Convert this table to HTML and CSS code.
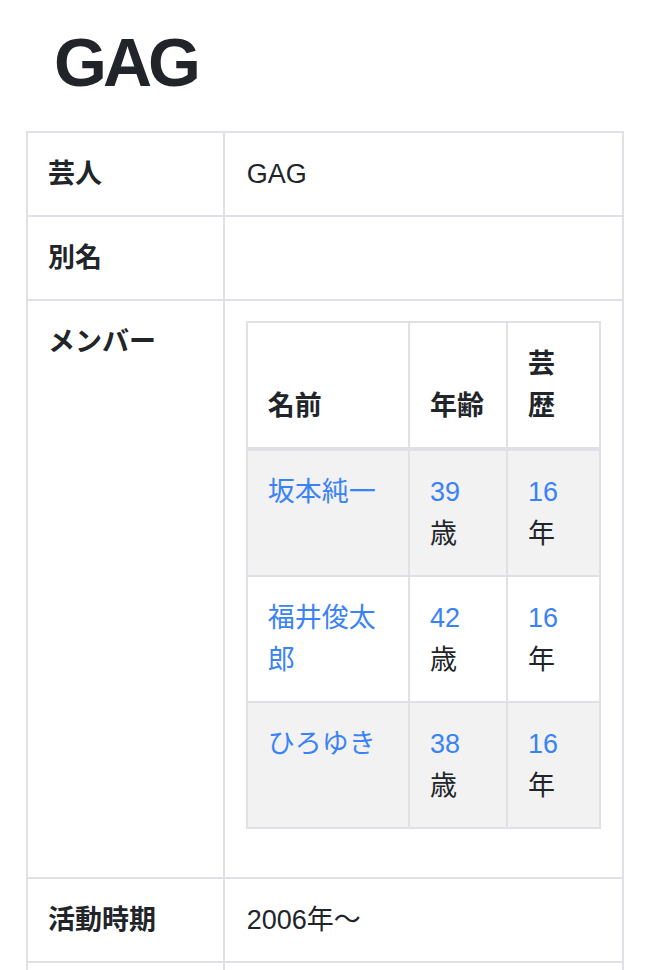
FILE: index.html
```html
<!DOCTYPE html>
<html lang="ja">
<head>
<meta charset="utf-8">
<title>GAG</title>
<link rel="stylesheet" href="styles.css">
</head>
<body>
<main class="page">
  <h1 class="title">GAG</h1>
  <table class="info">
    <colgroup>
      <col class="col-label">
      <col>
    </colgroup>
    <tbody>
      <tr><th class="label">芸人</th><td class="value">GAG</td></tr>
      <tr><th class="label">別名</th><td class="value"></td></tr>
      <tr>
        <th class="label">メンバー</th>
        <td class="value">
          <table class="members">
            <colgroup>
              <col>
              <col class="col-age">
              <col class="col-career">
            </colgroup>
            <thead>
              <tr><th class="cell head">名前</th><th class="cell head">年齢</th><th class="cell head">芸歴</th></tr>
            </thead>
            <tbody>
              <tr><td class="cell"><a href="#">坂本純一</a></td><td class="cell"><a href="#">39</a>歳</td><td class="cell"><a href="#">16</a>年</td></tr>
              <tr><td class="cell"><a href="#">福井俊太郎</a></td><td class="cell"><a href="#">42</a>歳</td><td class="cell"><a href="#">16</a>年</td></tr>
              <tr><td class="cell"><a href="#">ひろゆき</a></td><td class="cell"><a href="#">38</a>歳</td><td class="cell"><a href="#">16</a>年</td></tr>
            </tbody>
          </table>
        </td>
      </tr>
      <tr><th class="label">活動時期</th><td class="value">2006年〜</td></tr>
      <tr class="spacer"><th class="label"></th><td class="value"></td></tr>
    </tbody>
  </table>
</main>
</body>
</html>
```

FILE: styles.css
```css
html, body {
  margin: 0;
  background: #ffffff;
}

body {
  font-family: "Liberation Sans", "Noto Sans CJK JP", sans-serif;
  font-size: 27px;
  line-height: 42px;
  color: #212529;
}

.page {
  padding: 21px 26px 0;
}

.title {
  margin: 0 0 28px;
  padding-left: 28px;
  font-size: 68px;
  line-height: 82px;
  font-weight: 700;
  letter-spacing: -4px;
}

a {
  color: #3a82f7;
  text-decoration: none;
}

.info {
  width: 100%;
  border-collapse: collapse;
  table-layout: fixed;
}

.info .col-label {
  width: 33%;
}

.label,
.value {
  border: 2px solid #dfe1e6;
  padding: 20px;
  vertical-align: top;
  text-align: left;
}

.label {
  font-weight: 700;
}

.value {
  padding-left: 22px;
}

.spacer .label,
.spacer .value {
  height: 42px;
}

.members {
  width: 100%;
  margin-bottom: 28px;
  margin-left: -1px;
  border-collapse: collapse;
  table-layout: fixed;
}

.members .col-age {
  width: 98px;
}

.members .col-career {
  width: 93px;
}

.cell {
  border: 2px solid #dfe1e6;
  padding: 20px;
  vertical-align: top;
  text-align: left;
}

.head {
  vertical-align: bottom;
  font-weight: 700;
  border-bottom-width: 4px;
}

.members tbody tr:nth-child(odd) {
  background: #f2f2f2;
}
```
